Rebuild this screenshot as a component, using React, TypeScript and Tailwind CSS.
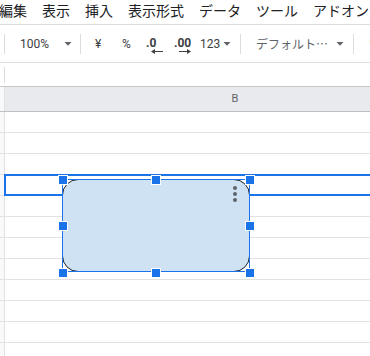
import React from 'react';

const menus = ['編集', '表示', '挿入', '表示形式', 'データ', 'ツール', 'アドオン'];
const rows = Array.from({ length: 12 }, (_, i) => i);

function Caret({ className = '' }: { className?: string }) {
  return (
    <svg width="8" height="4" viewBox="0 0 8 4" className={className}>
      <path d="M0.5 0h7L4 3.8z" fill="#5f6368" />
    </svg>
  );
}

function Sep({ className = '' }: { className?: string }) {
  return <div className={`w-px h-[20px] bg-[#dadce0] ${className}`} />;
}

function Handle({ className }: { className: string }) {
  return <div className={`absolute w-[8px] h-[8px] bg-[#1a73e8] border border-white box-content -m-px ${className}`} />;
}

export default function App() {
  return (
    <div className="relative w-[370px] h-[356px] overflow-hidden bg-white font-['Roboto','Noto_Sans_CJK_JP',sans-serif]">
      {/* menu bar */}
      <div className="h-[25px] border-b border-[#dadce0] flex items-start gap-[15px] -ml-px whitespace-nowrap font-['Noto_Sans_CJK_JP',sans-serif] text-[14px] leading-[20px] text-[#202124] [&>*]:shrink-0">
        {menus.map((m) => (
          <span key={m}>{m}</span>
        ))}
      </div>

      {/* toolbar */}
      <div className="h-[38px] border-b border-[#e0e0e0] flex items-center whitespace-nowrap text-[12px] leading-[12px] text-[#3c4043] [&>*]:shrink-0">
        <Sep className="ml-[4px]" />
        <div className="ml-[15px] w-[44px]">100%</div>
        <Caret />
        <Sep className="ml-[8px]" />
        <div className="ml-[14px] w-[27px]">¥</div>
        <div className="w-[24px]">%</div>
        <div className="w-[28px] self-start mt-[12px] flex flex-col">
          <span className="font-bold">.0</span>
          <svg width="12" height="5" viewBox="0 0 12 5" className="ml-[5px]">
            <path d="M0 2.5L4 0v2h8v1H4v2z" fill="#3c4043" />
          </svg>
        </div>
        <div className="w-[26px] self-start mt-[12px] flex flex-col">
          <span className="font-bold">.00</span>
          <svg width="12" height="5" viewBox="0 0 12 5" className="ml-[5px]">
            <path d="M12 2.5L8 0v2H0v1h8v2z" fill="#3c4043" />
          </svg>
        </div>
        <div className="w-[23px]">123</div>
        <Caret />
        <Sep className="ml-[9px]" />
        <div className="ml-[15px] w-[80px] font-['Noto_Sans_CJK_JP',sans-serif] text-[#5f6368]">デフォルト…</div>
        <Caret />
        <Sep className="ml-[9px]" />
        <div className="ml-[15px] text-[#e37400]">1</div>
      </div>

      {/* formula bar */}
      <div className="h-[24px] border-b border-[#c7c7c7] flex items-center">
        <div className="ml-[4px] w-px h-[16px] bg-[#dadce0]" />
      </div>

      {/* column header */}
      <div className="h-[25px] border-b border-[#c0c0c0] flex">
        <div className="w-[5px] shrink-0 border-r border-[#e2e2e3] bg-[#f8f9fa]" />
        <div className="flex-1 bg-[#e8eaed] flex items-center">
          <div className="w-[460px] shrink-0 text-center text-[11px] text-[#5f6368]">B</div>
        </div>
      </div>

      {/* grid rows */}
      {rows.map((r) => (
        <div key={r} className="h-[21px] border-b border-[#e2e2e3] flex">
          <div className="w-[5px] shrink-0 border-r border-[#e2e2e3] bg-[#f8f9fa]" />
          <div className="flex-1" />
        </div>
      ))}

      {/* selected cell */}
      <div className="absolute left-[4px] top-[174px] w-[420px] h-[22px] border-2 border-[#1a73e8]" />

      {/* shape */}
      <div className="absolute left-[62px] top-[179px] w-[188px] h-[93px] rounded-[16px] border border-[#202124] bg-[#cfe2f3]">
        <div className="absolute left-[170px] top-[6px] flex flex-col gap-[2px]">
          <div className="w-[4px] h-[4px] rounded-full bg-[#5f6368]" />
          <div className="w-[4px] h-[4px] rounded-full bg-[#5f6368]" />
          <div className="w-[4px] h-[4px] rounded-full bg-[#5f6368]" />
        </div>
      </div>
      <div className="absolute left-[62px] top-[179px] w-[188px] h-[93px] border border-[#1a73e8]" />

      <Handle className="left-[59px] top-[176px]" />
      <Handle className="left-[152px] top-[176px]" />
      <Handle className="left-[246px] top-[176px]" />
      <Handle className="left-[59px] top-[222px]" />
      <Handle className="left-[246px] top-[222px]" />
      <Handle className="left-[59px] top-[269px]" />
      <Handle className="left-[152px] top-[269px]" />
      <Handle className="left-[246px] top-[269px]" />
    </div>
  );
}
